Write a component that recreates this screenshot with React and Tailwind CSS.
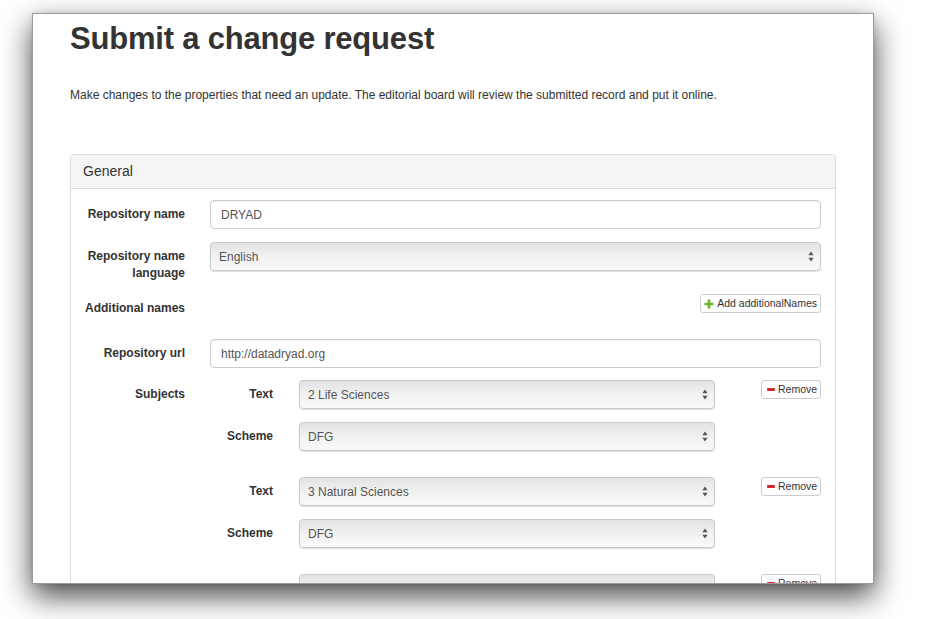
import React from 'react';

const font = { fontFamily: '"Liberation Sans", Arial, Helvetica, sans-serif' };

function Arrows() {
  return (
    <svg width="6" height="11" viewBox="0 0 6 11" className="shrink-0">
      <path d="M3 0.5 L5.6 4.2 L0.4 4.2 Z" fill="#555" />
      <path d="M3 10.5 L5.6 6.8 L0.4 6.8 Z" fill="#555" />
    </svg>
  );
}

function TextInput({ value }) {
  return (
    <div className="flex-1 h-[29px] flex items-center px-[10px] bg-white border border-[#cccccc] rounded-[4px] shadow-[inset_0_1px_1px_rgba(0,0,0,0.06)] text-[12px] text-[#555]">
      {value}
    </div>
  );
}

function Select({ value, className = 'flex-1' }) {
  return (
    <div className={`${className} h-[29px] flex items-center justify-between pl-[8px] pr-[6px] border border-[#c8c8c8] rounded-[4px] bg-gradient-to-b from-[#e3e3e3] via-[#f1f1f1] to-[#f9f9f9] shadow-[0_1px_1px_rgba(0,0,0,0.12)] text-[12px] text-[#555]`}>
      <span className="whitespace-nowrap">{value}</span>
      <Arrows />
    </div>
  );
}

function Label({ children, className = 'w-[100px]' }) {
  return (
    <div className={`${className} shrink-0 pt-[6px] text-right text-[12px] leading-[17px] font-bold text-[#333]`}>
      {children}
    </div>
  );
}

function RemoveButton() {
  return (
    <button className="ml-auto w-[60px] h-[19px] flex items-center gap-[3px] pl-[5px] bg-white border border-[#cccccc] rounded-[3px] text-[10.5px] text-[#333] whitespace-nowrap">
      <span className="w-[8px] h-[3px] bg-[#d2262c] rounded-[1px]" />
      Remove
    </button>
  );
}

function SubjectGroup({ text, scheme }) {
  return (
    <div className="flex mb-[26px]">
      <div className="w-[505px] flex flex-col gap-[13px]">
        <div className="flex items-start">
          <Label className="w-[63px]">Text</Label>
          <div className="w-[26px]" />
          <Select value={text} />
        </div>
        <div className="flex items-start">
          <Label className="w-[63px]">Scheme</Label>
          <div className="w-[26px]" />
          <Select value={scheme} />
        </div>
      </div>
      <RemoveButton />
    </div>
  );
}

export default function App() {
  return (
    <div className="w-[926px] h-[619px] bg-white pt-[13px] pl-[32px] overflow-hidden" style={font}>
      <div className="w-[842px] h-[571px] overflow-hidden bg-white border border-[#9b9b9b] shadow-[0_12px_28px_rgba(0,0,0,0.72),0_0_6px_rgba(0,0,0,0.1)] px-[37px] pt-[8px]">
        <h1 className="text-[31px] leading-[34px] font-bold text-[#333] tracking-[-0.2px]">Submit a change request</h1>
        <p className="mt-[31px] text-[12px] leading-[17px] text-[#333]">
          Make changes to the properties that need an update. The editorial board will review the submitted record and put it online.
        </p>

        <div className="mt-[50px] border border-[#dddddd] rounded-t-[4px] min-h-[500px]">
          <div className="h-[34px] flex items-center px-[12px] bg-[#f5f5f5] border-b border-[#dddddd] rounded-t-[4px] text-[14px] text-[#333]">
            General
          </div>
          <div className="px-[14px] pt-[11px]">
            <div className="flex items-start gap-[25px] mb-[13px]">
              <Label>Repository name</Label>
              <TextInput value="DRYAD" />
            </div>
            <div className="flex items-start gap-[25px] mb-[12px]">
              <Label>Repository name language</Label>
              <Select value="English" />
            </div>
            <div className="flex items-start gap-[25px] mb-[22px]">
              <Label>Additional names</Label>
              <div className="flex-1 flex justify-end">
                <button className="h-[19px] flex items-center gap-[3px] pl-[3px] pr-[3px] bg-white border border-[#cccccc] rounded-[3px] text-[10.5px] text-[#333] whitespace-nowrap">
                  <svg width="10" height="10" viewBox="0 0 10 10">
                    <path d="M5 0.5 V9.5 M0.5 5 H9.5" stroke="#6cb52d" strokeWidth="2.6" />
                  </svg>
                  Add additionalNames
                </button>
              </div>
            </div>
            <div className="flex items-start gap-[25px] mb-[12px]">
              <Label>Repository url</Label>
              <TextInput value="http://datadryad.org" />
            </div>
            <div className="flex items-start gap-[25px]">
              <Label>Subjects</Label>
              <div className="flex-1">
                <SubjectGroup text="2 Life Sciences" scheme="DFG" />
                <SubjectGroup text="3 Natural Sciences" scheme="DFG" />
                <SubjectGroup text="11 Social and Behavioural Sciences" scheme="DFG" />
              </div>
            </div>
          </div>
        </div>
      </div>
    </div>
  );
}
